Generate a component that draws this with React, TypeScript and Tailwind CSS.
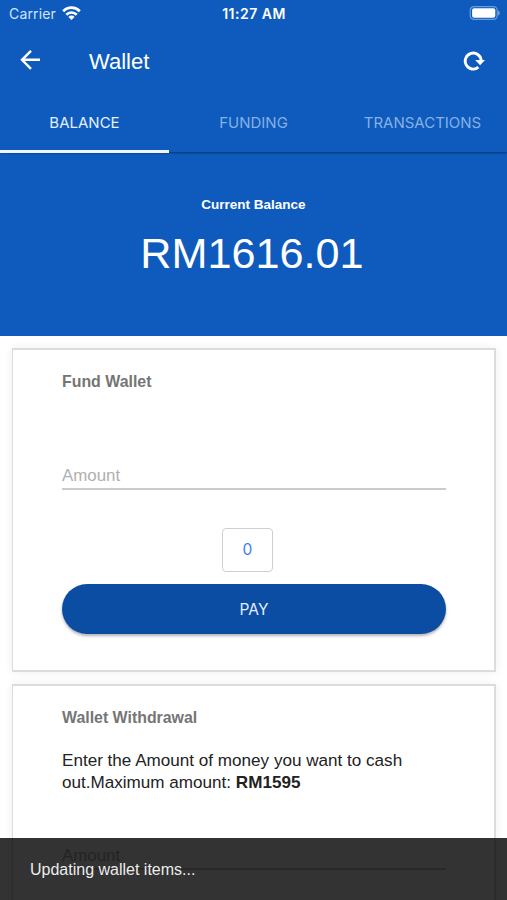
import { useState } from "react";
import clsx from "clsx";

const TABS = ["BALANCE", "FUNDING", "TRANSACTIONS"];

function StatusBar() {
  return (
    <div className="grid h-7 grid-cols-3 items-center pb-px pl-[9px] pr-[7px] font-['Inter',sans-serif] text-[14px]">
      <div className="flex items-center gap-[6px]">
        <span className="tracking-[0.15px] text-[#d3e4fb]">Carrier</span>
        <svg className="-mt-[2px]" width="19" height="14" viewBox="0 0 19 14" fill="none" stroke="currentColor" strokeWidth="2.7">
          <path d="M1.2 5.2a11.6 11.6 0 0 1 16.6 0" />
          <path d="M4.3 8.7a7.3 7.3 0 0 1 10.4 0" />
          <path d="M9.5 14 6.4 10.9a4.3 4.3 0 0 1 6.2 0z" fill="currentColor" stroke="none" />
        </svg>
      </div>
      <span className="-ml-px text-center text-[14px] font-semibold tracking-[0.5px]">11:27 AM</span>
      <svg className="-mt-px justify-self-end" width="31" height="14" viewBox="0 0 31 14">
        <rect x="1.2" y="0.7" width="27" height="12.6" rx="3.6" fill="none" stroke="#fff" strokeOpacity="0.4" strokeWidth="1.2" />
        <rect x="3.1" y="2.3" width="23.2" height="9.4" rx="2" fill="#fff" />
        <path d="M29.2 4.6c2 .8 2 4 0 4.8z" fill="#fff" fillOpacity="0.5" />
      </svg>
    </div>
  );
}

function Toolbar() {
  return (
    <div className="flex h-[66px] items-center pl-5 pr-[21px]">
      <svg className="-mt-[3px]" width="21" height="20" viewBox="0 0 21 20" fill="none" stroke="currentColor" strokeWidth="2.4">
        <path d="M20 9.8H2M11 .8l-9 9 9 9" />
      </svg>
      <h1 className="ml-12 mt-[2px] flex-1 text-[22px] leading-none">Wallet</h1>
      <svg className="-mt-px" width="23" height="20" viewBox="0 0 23 20" fill="none">
        <path d="M15.4 16.2a8 8 0 1 1 2.8-6.7" stroke="currentColor" strokeWidth="2.9" />
        <path d="M12.2 9h9.8l-4.9 5.2z" fill="currentColor" />
      </svg>
    </div>
  );
}

function AmountField() {
  return (
    <div className="flex h-[26px] items-start border-b-2 border-[#cbcbcb]">
      <span className="mt-px text-[16.9px] leading-[22px] text-[#b0b0b0]">Amount</span>
    </div>
  );
}

export default function App() {
  const [active, setActive] = useState(0);

  return (
    <div className="relative h-[900px] w-[507px] overflow-hidden bg-white font-['Liberation_Sans',Arial,sans-serif] text-[#222]">
      <header className="relative h-[152px] bg-[#0e5bbd] text-white shadow-[0_1px_2px_rgba(0,0,0,0.45)]">
        <StatusBar />
        <Toolbar />
        <nav className="grid h-[58.5px] grid-cols-3 font-['Inter',sans-serif] text-[15px]">
          {TABS.map((tab, i) => (
            <button
              key={tab}
              type="button"
              onClick={() => setActive(i)}
              className={clsx(
                "border-b-[3px] pt-[2px]",
                i === active ? "border-[#eef5ff] text-[#e4efff]" : "border-transparent text-[#86b0e6]",
              )}
            >
              {tab}
            </button>
          ))}
        </nav>
      </header>

      <section className="flex h-[184px] flex-col items-center bg-[#0e5bbd] pt-[45px] text-white">
        <h2 className="text-[13.5px] font-bold leading-4">Current Balance</h2>
        <p className="mr-[3px] mt-4 text-[43.2px] leading-[48px]">RM1616.01</p>
      </section>

      <main className="flex flex-col gap-3 p-3 pr-[11px]">
        <section className="h-[324px] border-2 border-l border-[#dcdcde] bg-white pl-[49px] pr-12 pt-[22px] shadow-[0_0_9px_rgba(0,0,0,0.07)]">
          <h3 className="text-[15.9px] font-bold leading-5 text-[#757575]">Fund Wallet</h3>
          <div className="mt-[72px]">
            <AmountField />
          </div>
          <div className="mt-[38px] flex justify-center">
            <span className="mr-[13px] flex h-11 w-[51px] items-center justify-center rounded-[4px] border border-[#cfcfd2] font-['Inter',sans-serif] text-[15.5px] text-[#3880f0]">
              0
            </span>
          </div>
          <button
            type="button"
            className="mt-3 h-[50px] w-full rounded-full bg-[#0b4da2] pt-px font-['Inter',sans-serif] text-[15.5px] text-[#e4efff] shadow-[0_2px_3px_rgba(0,0,0,0.3)]"
          >
            PAY
          </button>
        </section>

        <section className="h-[324px] shrink-0 border-2 border-l border-[#dcdcde] bg-white pl-[49px] pr-12 pt-[22px] shadow-[0_0_9px_rgba(0,0,0,0.07)]">
          <h3 className="text-[15.9px] font-bold leading-5 text-[#757575]">Wallet Withdrawal</h3>
          <p className="mt-[22px] text-[17.1px] leading-[22px]">
            Enter the Amount of money you want to cash out.Maximum amount: <strong>RM1595</strong>
          </p>
          <div className="mt-[50px]">
            <AmountField />
          </div>
        </section>
      </main>

      <div className="absolute inset-x-0 bottom-0 flex h-[62px] items-center bg-black/80 pl-[30px] pt-px text-[16px] text-[#ececec]">
        Updating wallet items...
      </div>
    </div>
  );
}
